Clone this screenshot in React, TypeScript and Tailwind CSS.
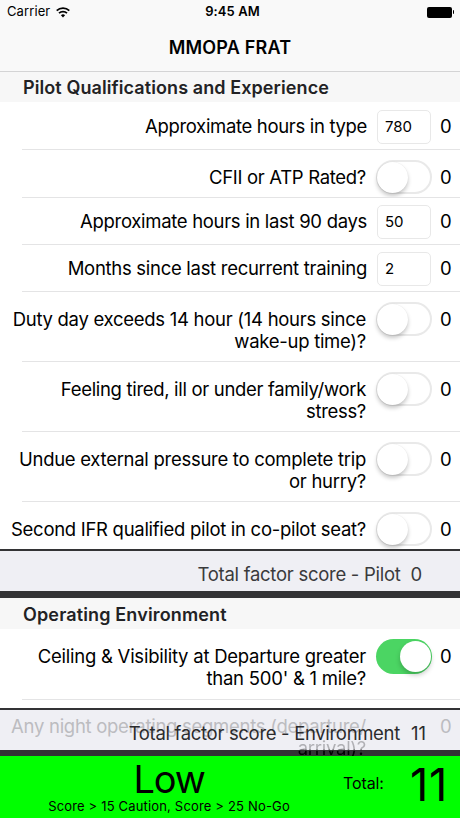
import React from "react";

type Row = {
  lines: string[];
  value?: string;
  on?: boolean;
  height: string;
  pad: string;
  tracking: string;
};

const pilotRows: Row[] = [
  { lines: ["Approximate hours in type"], value: "780", height: "h-[48px]", pad: "pt-[8px]", tracking: "tracking-[-0.33px]" },
  { lines: ["CFII or ATP Rated?"], height: "h-[48px]", pad: "pt-[10px]", tracking: "tracking-[-0.31px]" },
  { lines: ["Approximate hours in last 90 days"], value: "50", height: "h-[47px]", pad: "pt-[7px]", tracking: "tracking-[-0.31px]" },
  { lines: ["Months since last recurrent training"], value: "2", height: "h-[47px]", pad: "pt-[7px]", tracking: "tracking-[-0.29px]" },
  { lines: ["Duty day exceeds 14 hour (14 hours since", "wake-up time)?"], height: "h-[70px]", pad: "pt-[10px]", tracking: "tracking-[-0.28px]" },
  { lines: ["Feeling tired, ill or under family/work", "stress?"], height: "h-[70px]", pad: "pt-[10px]", tracking: "tracking-[-0.32px]" },
  { lines: ["Undue external pressure to complete trip", "or hurry?"], height: "h-[70px]", pad: "pt-[10px]", tracking: "tracking-[-0.28px]" },
  { lines: ["Second IFR qualified pilot in co-pilot seat?"], height: "h-[47px]", pad: "pt-[10px]", tracking: "tracking-[-0.29px]" },
];

const environmentRow: Row = {
  lines: ["Ceiling & Visibility at Departure greater", "than 500' & 1 mile?"],
  on: true,
  height: "h-[71px]",
  pad: "pt-[10px]",
  tracking: "tracking-[-0.24px]",
};

function Toggle({ on }: { on?: boolean }) {
  return on ? (
    <div className="flex h-[35px] w-[56px] items-center justify-end rounded-full bg-[#4bd563] pr-[1.5px]">
      <div className="size-[31px] rounded-full bg-white shadow-[0_3px_5px_rgba(0,0,0,0.22)]" />
    </div>
  ) : (
    <div className="flex h-[34px] w-[56px] items-center rounded-full border-2 border-[#e9e9e9] bg-white">
      <div className="-ml-px size-[31px] shrink-0 rounded-full bg-white shadow-[0_3px_4px_rgba(0,0,0,0.22),0_0_1px_rgba(0,0,0,0.1)]" />
    </div>
  );
}

function QuestionRow({ row, last }: { row: Row; last?: boolean }) {
  const textPad = row.value ? "pt-[5px]" : "pt-[6px]";
  return (
    <div className={`flex shrink-0 items-start bg-white ${row.height} ${row.pad} ${last ? "" : "relative"}`}>
      <div
        className={`text-right text-[18.5px] leading-[22px] whitespace-nowrap text-black ${textPad} ${row.tracking} ${
          row.value ? "w-[367px]" : "w-[366px]"
        }`}
      >
        {row.lines.map((line) => (
          <div key={line}>{line}</div>
        ))}
      </div>
      {row.value ? (
        <div className="ml-[10px] flex h-[34px] w-[54px] items-center rounded-[5px] border border-[#e8e8e8] pl-[7px] text-[15px] text-black">
          {row.value}
        </div>
      ) : (
        <div className="ml-[10px] w-[55px]">
          <Toggle on={row.on} />
        </div>
      )}
      <div className={`ml-[9px] text-[18.5px] leading-[22px] text-black ${textPad}`}>0</div>
      {!last && <div className="absolute right-0 bottom-0 left-[22px] h-px bg-[#e4e4e5]" />}
    </div>
  );
}

function SectionHeader({ title, className }: { title: string; className: string }) {
  return (
    <div
      className={`flex shrink-0 items-center bg-[#f7f7f7] pl-[23px] text-[18px] font-semibold whitespace-nowrap text-[#222224] ${className}`}
    >
      {title}
    </div>
  );
}

export default function App() {
  return (
    <div className="flex h-[818px] w-[460px] flex-col overflow-hidden bg-white font-['Inter','Liberation_Sans',sans-serif]">
      <header className="h-[72px] shrink-0 border-b border-[#d4d4d5] bg-[#f9f9f9] text-black">
        <div className="grid h-[24px] grid-cols-3 items-center pr-[6px] pl-[7px] text-[13px]">
          <div className="flex items-center gap-[6px]">
            <span className="tracking-[0.1px]">Carrier</span>
            <svg width="14" height="11" viewBox="0 0 14 11" fill="none" stroke="#000" strokeWidth="1.7">
              <path d="M0.7 3.7a9 9 0 0 1 12.6 0" />
              <path d="M3 6.2a5.7 5.7 0 0 1 8 0" />
              <path d="M7 10.6 4.9 8.3a3 3 0 0 1 4.2 0Z" fill="#000" stroke="none" />
            </svg>
          </div>
          <div className="pl-[4px] text-center font-semibold tracking-[0.1px]">9:45 AM</div>
          <div className="flex items-center justify-end gap-px">
            <div className="h-[11px] w-[25px] rounded-[2px] bg-black" />
            <div className="h-[4px] w-[1.5px] rounded-r-full bg-black" />
          </div>
        </div>
        <h1 className="pt-[12px] text-center text-[18px] leading-[24px] font-semibold tracking-[0.2px]">MMOPA FRAT</h1>
      </header>

      <SectionHeader title="Pilot Qualifications and Experience" className="h-[30px] pt-px tracking-[0.09px]" />
      {pilotRows.map((row, i) => (
        <QuestionRow key={row.lines[0]} row={row} last={i === pilotRows.length - 1} />
      ))}

      <div className="flex h-[49px] shrink-0 items-center justify-end gap-[10px] border-t-2 border-b-[7px] border-[#333335] bg-[#efeff4] pt-[8px] pr-[38px] text-[18.5px] tracking-[-0.27px] text-[#3a3a3c]">
        <span>Total factor score - Pilot</span>
        <span>0</span>
      </div>

      <SectionHeader title="Operating Environment" className="h-[31px] pt-px tracking-[0.14px]" />
      <QuestionRow row={environmentRow} />

      <div className="h-[8px] shrink-0 bg-white" />
      <div className="relative flex h-[48px] shrink-0 items-center justify-end gap-[11px] border-t-2 border-b-[6px] border-[#333335] bg-[#efeff4] pt-[7px] pr-[34px] text-[18.5px] text-[#2b2b2d]">
        <div className="absolute top-[5px] left-0 flex w-[366px] flex-col items-end leading-[22px] tracking-[-0.28px] whitespace-nowrap text-[#bcbcc0]">
          <div>Any night operating segments (departure/</div>
          <div className="bg-linear-to-b from-[#b0b0b4] from-55% to-black to-65% bg-clip-text text-transparent">arrival)?</div>
        </div>
        <div className="absolute top-[5px] left-[440px] leading-[22px] text-[#bcbcc0]">0</div>
        <span className="relative tracking-[-0.32px]">Total factor score - Environment</span>
        <span className="relative">11</span>
      </div>

      <footer className="relative flex h-[63px] shrink-0 bg-[#00ff00] text-black">
        <div className="w-[338px] text-center">
          <div className="pt-[4px] text-[38px] leading-[38px] tracking-[-1.2px]">Low</div>
          <div className="text-[13px] leading-[16px] tracking-[0.17px] whitespace-nowrap">Score &gt; 15 Caution, Score &gt; 25 No-Go</div>
        </div>
        <div className="w-[72px] pt-[16px] pl-[5px] text-[16px] leading-[22px] tracking-[-0.1px]">Total:</div>
        <div className="pt-[6px] text-[45px] leading-[45px] tracking-[0.8px]">11</div>
      </footer>
    </div>
  );
}
